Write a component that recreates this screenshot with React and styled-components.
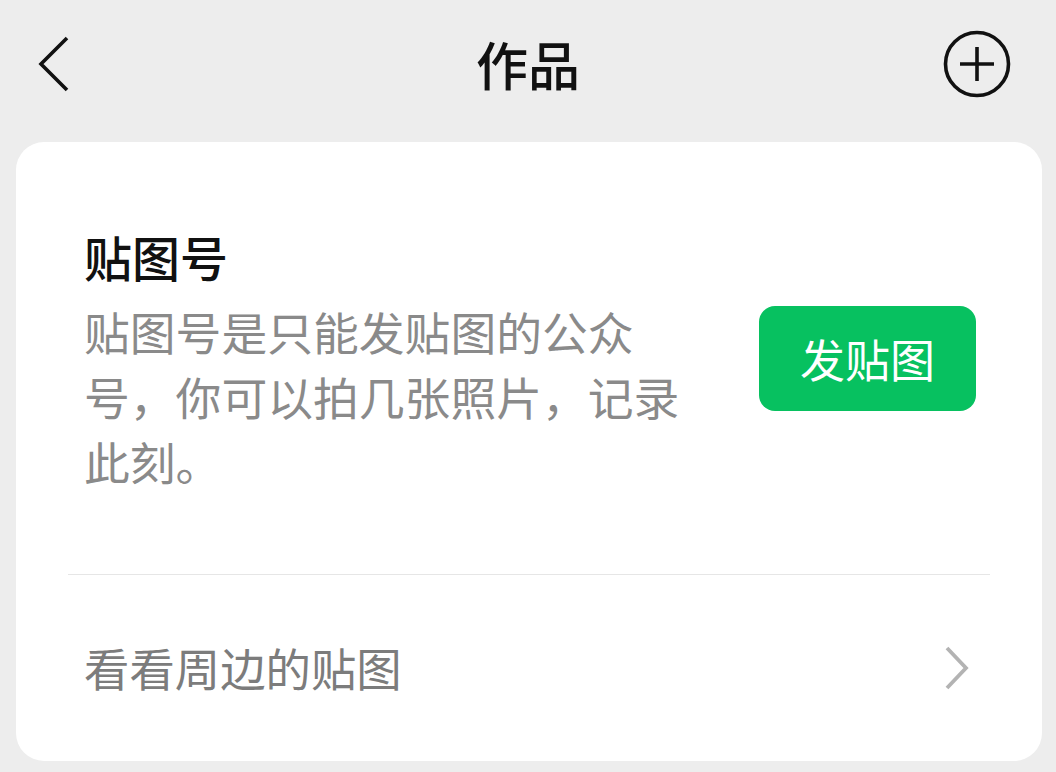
import styled, { createGlobalStyle } from 'styled-components';

const GlobalStyle = createGlobalStyle`
	html, body {
		margin: 0;
		padding: 0;
		background: #ededed;
		font-family: "Noto Sans CJK SC", "Noto Sans", sans-serif;
	}
`;

const Page = styled.div`
	width: 1056px;
	height: 772px;
	overflow: hidden;
	background: #ededed;
`;

const NavBar = styled.div`
	display: flex;
	align-items: center;
	justify-content: space-between;
	height: 128px;
	padding: 0 43px 0 34px;
`;

const NavTitle = styled.span`
	font-size: 52px;
	font-weight: 500;
	color: #111;
	line-height: 1;
	margin-left: 9px;
`;

const IconButton = styled.div`
	display: flex;
	align-items: center;
	justify-content: ${(p) => p.$align || 'center'};
	width: 72px;
	height: 72px;
`;

const Card = styled.div`
	margin: 14px 14px 0 16px;
	background: #fff;
	border-radius: 28px;
	padding: 0 52px;
`;

const Intro = styled.div`
	display: flex;
	align-items: center;
	justify-content: space-between;
	padding: 81px 14px 80px 16px;
	border-bottom: 1px solid #e6e6e6;
`;

const TextBlock = styled.div`
	width: 610px;
`;

const Title = styled.div`
	font-size: 48px;
	font-weight: 500;
	color: #111;
	line-height: 66px;
	margin-bottom: 10px;
`;

const Desc = styled.div`
	font-size: 45.8px;
	color: #8a8a8a;
	line-height: 65px;
`;

const PostButton = styled.button`
	width: 217px;
	height: 105px;
	border: none;
	border-radius: 16px;
	background: #07c160;
	color: #fff;
	font-family: inherit;
	font-size: 45px;
	padding: 0;
	cursor: pointer;
`;

const LinkRow = styled.div`
	display: flex;
	align-items: center;
	justify-content: space-between;
	height: 186px;
	padding: 0 20px 0 16px;
`;

const LinkText = styled.span`
	font-size: 45.4px;
	color: #7c7c7c;
	line-height: 1;
`;

export default function App() {
	return (
		<Page>
			<GlobalStyle />
			<NavBar>
				<IconButton $align="flex-start">
					<svg width="40" height="60" viewBox="0 0 40 60">
						<polyline points="33,4 7,30 33,56" fill="none" stroke="#111" strokeWidth="3.6" strokeLinejoin="miter" />
					</svg>
				</IconButton>
				<NavTitle>作品</NavTitle>
				<IconButton>
					<svg width="72" height="72" viewBox="0 0 72 72">
						<circle cx="36" cy="36" r="31.5" fill="none" stroke="#111" strokeWidth="3.6" />
						<line x1="19" y1="36" x2="53" y2="36" stroke="#111" strokeWidth="3.6" />
						<line x1="36" y1="19" x2="36" y2="53" stroke="#111" strokeWidth="3.6" />
					</svg>
				</IconButton>
			</NavBar>
			<Card>
				<Intro>
					<TextBlock>
						<Title>贴图号</Title>
						<Desc>贴图号是只能发贴图的公众号，你可以拍几张照片，记录此刻。</Desc>
					</TextBlock>
					<PostButton>发贴图</PostButton>
				</Intro>
				<LinkRow>
					<LinkText>看看周边的贴图</LinkText>
					<svg width="26" height="44" viewBox="0 0 26 44">
						<polyline points="3,2 22,22 3,42" fill="none" stroke="#b3b3b3" strokeWidth="3.8" />
					</svg>
				</LinkRow>
			</Card>
		</Page>
	);
}
